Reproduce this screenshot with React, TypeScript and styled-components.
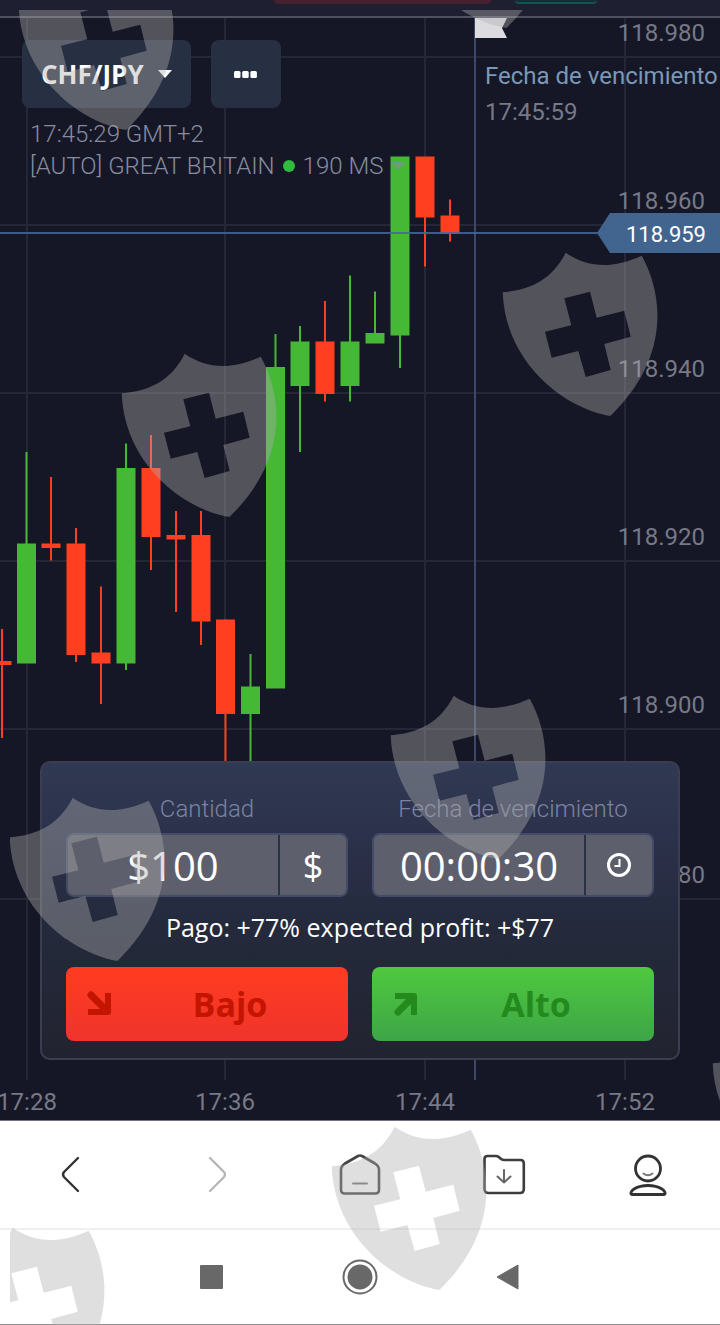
import React from "react";
import styled, { createGlobalStyle } from "styled-components";

const GlobalStyle = createGlobalStyle`
  *, *::before, *::after { box-sizing: border-box; }
  body { margin: 0; background: #fff; }
  button, input { font: inherit; color: inherit; margin: 0; padding: 0; border: 0; background: none; }
  button { cursor: pointer; }
  svg { display: block; }
`;

const Page = styled.div`
  position: relative;
  overflow: hidden;
  font-family: "Open Sans", "Noto Sans", sans-serif;
`;

const TopStrip = styled.div`
  display: flex;
  align-items: flex-start;
  gap: 24px;
  height: 18px;
  padding-left: 274px;
  background: #1e1f31;
  border-bottom: 2px solid #50515f;
`;

const StripPill = styled.div<{ $tone: "loss" | "deposit" }>`
  width: ${(p) => (p.$tone === "loss" ? 217 : 82)}px;
  height: 4px;
  border-radius: 0 0 8px 8px;
  background: ${(p) => (p.$tone === "loss" ? "#47202f" : "#152c38")};
  border-bottom: ${(p) => (p.$tone === "loss" ? "0" : "2px solid #0d5850")};
`;

const Terminal = styled.main`
  position: relative;
  background: #161726;
  border-bottom: 1px solid #77707c;
`;

const ChartSvg = styled.svg`
  width: 100%;
  height: auto;
  font-family: Roboto, sans-serif;
  font-size: 24px;
`;

const ChartHeader = styled.div`
  position: absolute;
  top: 22px;
  left: 22px;
`;

const Toolbar = styled.div`
  display: flex;
  gap: 20px;
`;

const ToolButton = styled.button`
  display: flex;
  align-items: center;
  justify-content: center;
  gap: 14px;
  height: 68px;
  min-width: 70px;
  padding: 0 19px;
  border-radius: 8px;
  background: #273042;
  color: #fff;
  font-size: 26px;
  font-weight: 700;
`;

const ServerInfo = styled.div`
  padding: 10px 0 0 8px;
  color: #868ca0;
  font-family: Roboto, sans-serif;
  font-size: 24px;
  font-weight: 300;
  line-height: 32px;
`;

const ServerRow = styled.div`
  display: flex;
  align-items: center;
  gap: 8px;
`;

const StatusDot = styled.span`
  width: 12px;
  height: 12px;
  border-radius: 50%;
  background: #2fbb3e;
`;

const TradePanel = styled.form`
  position: absolute;
  left: 40px;
  right: 40px;
  bottom: 60px;
  padding: 30px 24px 17px;
  border: 2px solid #3b3e4f;
  border-radius: 10px;
  background: linear-gradient(#303953, #2b3049 30%, #242a3c 55%, #222330);
`;

const TwoColumns = styled.div`
  display: grid;
  grid-template-columns: repeat(2, minmax(0, 1fr));
  gap: 24px;
`;

const Field = styled.div`
  display: flex;
  flex-direction: column;
  gap: 8px;
`;

const FieldLabel = styled.label`
  color: #7b83a0;
  font-family: Roboto, sans-serif;
  font-size: 24px;
  font-weight: 300;
  line-height: 32px;
  text-align: center;
`;

const FieldBox = styled.div`
  display: flex;
  height: 64px;
  border: 2px solid #434b66;
  border-radius: 8px;
  background: #5e5f6c;
  color: #fff;
`;

const FieldInput = styled.input`
  flex: 1;
  min-width: 0;
  font-size: 40px;
  text-align: center;
`;

const FieldButton = styled.button`
  display: flex;
  align-items: center;
  justify-content: center;
  width: 68px;
  border-left: 2px solid #2c3047;
  font-size: 36px;
`;

const Payout = styled.p`
  margin: 14px 0 24px;
  color: #fff;
  font-size: 25px;
  line-height: 32px;
  text-align: center;
`;

const OrderButton = styled.button<{ $side: "down" | "up" }>`
  display: flex;
  align-items: center;
  height: 74px;
  padding-left: 20px;
  border-radius: 8px;
  font-size: 34px;
  font-weight: 700;
  color: ${(p) => (p.$side === "down" ? "#c41500" : "#248a1e")};
  background: ${(p) =>
    p.$side === "down"
      ? "linear-gradient(#ff3c20, #f0342c)"
      : "linear-gradient(#4fc93e, #3da548)"};
`;

const OrderLabel = styled.span`
  flex: 1;
  text-align: center;
`;

const BrowserNav = styled.nav`
  display: grid;
  grid-template-columns: repeat(5, 1fr);
  height: 109px;
  border-bottom: 2px solid #f0f0f0;
  background: #fff;
`;

const SystemNav = styled.nav`
  display: flex;
  justify-content: center;
  height: 95px;
  border-bottom: 1px solid #8c8c8c;
  background: #fff;
`;

const NavButton = styled.button<{ $width?: number }>`
  display: flex;
  align-items: center;
  justify-content: center;
  width: ${(p) => (p.$width ? `${p.$width}px` : "auto")};
`;

const WatermarkLayer = styled.div`
  position: absolute;
  inset: 10px 0 0 10px;
  overflow: hidden;
  pointer-events: none;
`;

const Shield = styled.svg<{ $x: number; $y: number }>`
  position: absolute;
  left: ${(p) => p.$x}px;
  top: ${(p) => p.$y}px;
`;

const RED = "#ff3f20";
const GREEN = "#45b836";

type Candle = { x: number; top: number; bottom: number; high: number; low: number; up?: boolean };

const candles: Candle[] = [
  { x: 2, top: 661, bottom: 665, high: 629, low: 738 },
  { x: 26.5, top: 543.5, bottom: 663.5, high: 452, low: 663, up: true },
  { x: 51, top: 543.5, bottom: 548, high: 477, low: 560.5 },
  { x: 76, top: 543.5, bottom: 655, high: 528, low: 662 },
  { x: 101, top: 652.5, bottom: 663.5, high: 586.5, low: 704 },
  { x: 126, top: 468, bottom: 663.5, high: 443.5, low: 670, up: true },
  { x: 151, top: 468, bottom: 537, high: 435, low: 570 },
  { x: 176, top: 535, bottom: 539.5, high: 511, low: 612 },
  { x: 201, top: 535, bottom: 621.5, high: 511, low: 645 },
  { x: 225.5, top: 619.5, bottom: 714, high: 619.5, low: 780 },
  { x: 250.5, top: 686.5, bottom: 714, high: 654, low: 780, up: true },
  { x: 275.5, top: 367, bottom: 688.5, high: 334, low: 688, up: true },
  { x: 300, top: 341.5, bottom: 386, high: 326, low: 452, up: true },
  { x: 325, top: 341.5, bottom: 394, high: 301, low: 401.5 },
  { x: 350, top: 341.5, bottom: 386, high: 275.5, low: 401.5, up: true },
  { x: 375, top: 333, bottom: 343.5, high: 291.5, low: 343, up: true },
  { x: 400, top: 156.5, bottom: 335.5, high: 157, low: 368, up: true },
  { x: 425, top: 156.5, bottom: 217.5, high: 157, low: 266.5 },
  { x: 450, top: 215.5, bottom: 234, high: 199.5, low: 241.5 },
];

const prices = [
  { label: "118.980", grid: 57, text: 41 },
  { label: "118.960", grid: 225, text: 209 },
  { label: "118.940", grid: 393, text: 377 },
  { label: "118.920", grid: 561, text: 545 },
  { label: "118.900", grid: 729, text: 713 },
  { label: "118.880", grid: 899, text: 883 },
];

const times = [
  { label: "17:28", x: 27 },
  { label: "17:36", x: 225 },
  { label: "17:44", x: 425 },
  { label: "17:52", x: 625 },
];

const shields = [
  [18, -34], [398, -136], [502, 252], [121, 353], [390, 695],
  [9, 797], [712, 1023], [331, 1126], [-51, 1227],
];

function PriceChart() {
  return (
    <ChartSvg viewBox="0 18 720 1102" role="img" aria-label="CHF/JPY">
      <g stroke="#262736" strokeWidth="2">
        {times.map((t) => <line key={t.label} x1={t.x} x2={t.x} y1={18} y2={1080} />)}
        {prices.map((p) => <line key={p.label} x1={0} x2={720} y1={p.grid} y2={p.grid} />)}
      </g>
      {candles.map((c) => (
        <g key={c.x} fill={c.up ? GREEN : RED}>
          <rect x={c.x - 1} y={c.high} width={2} height={c.low - c.high} />
          <rect x={c.x - 9.5} y={c.top} width={19} height={c.bottom - c.top} />
        </g>
      ))}
      <line x1={475} x2={475} y1={18} y2={1080} stroke="#3b4a6b" strokeWidth="2" />
      <line x1={0} x2={600} y1={233} y2={233} stroke="#44679a" strokeOpacity="0.85" strokeWidth="2" />
      <path d="M475 18H507L502 28L507 38H475Z" fill="#dcdce0" />
      <g fill="#777986" textAnchor="end">
        {prices.map((p) => <text key={p.label} x={705} y={p.text}>{p.label}</text>)}
      </g>
      <path d="M597 233L610 213H720V253H610Z" fill="#42658f" />
      <text x={706} y={242} fill="#fff" fontSize={22} textAnchor="end">118.959</text>
      <text x={485} y={84} fill="#7b98b8">Fecha de vencimiento</text>
      <text x={485} y={120} fill="#777986">17:45:59</text>
      <g fill="#777986" textAnchor="middle">
        {times.map((t) => <text key={t.label} x={t.x} y={1110}>{t.label}</text>)}
      </g>
    </ChartSvg>
  );
}

function Watermarks() {
  return (
    <WatermarkLayer aria-hidden="true">
      {shields.map(([x, y]) => (
        <Shield key={`${x}:${y}`} $x={x - 10} $y={y - 10} width="157" height="165" viewBox="0 0 157 165">
          <path
            fill="#afafaf"
            fillOpacity="0.4"
            fillRule="evenodd"
            d="M.7 40.3C28 38 50 28 63.7.7C86 16 110 17 139.7 3.7C161 42 169 105 108.7 163.7Q106 164 103 163C55 152 3 106 .7 40.3ZM62.3 46.3L88 39.7L94.7 65.7L122.3 58.7L128.7 84.7L102.3 92L108.7 118L83.7 125L76.3 99L49.7 105.7L43 79.7L69.3 73.3Z"
          />
        </Shield>
      ))}
    </WatermarkLayer>
  );
}

export default function App() {
  return (
    <Page>
      <GlobalStyle />
      <TopStrip>
        <StripPill $tone="loss" />
        <StripPill $tone="deposit" />
      </TopStrip>
      <Terminal>
        <PriceChart />
        <ChartHeader>
          <Toolbar>
            <ToolButton type="button">
              CHF/JPY
              <svg width="14" height="8" viewBox="0 0 14 8"><path d="M0 0H14L7 8Z" fill="#fff" /></svg>
            </ToolButton>
            <ToolButton type="button" aria-label="Más">
              <svg width="23" height="7" viewBox="0 0 23 7" fill="#fff">
                <rect width="6.5" height="7" rx="1.5" />
                <rect x="8.2" width="6.5" height="7" rx="1.5" />
                <rect x="16.4" width="6.5" height="7" rx="1.5" />
              </svg>
            </ToolButton>
          </Toolbar>
          <ServerInfo>
            <div>17:45:29 GMT+2</div>
            <ServerRow>
              <span>[AUTO] GREAT BRITAIN</span>
              <StatusDot />
              <span>190 MS</span>
              <svg width="14" height="8" viewBox="0 0 14 8"><path d="M0 0H14L7 8Z" fill="#6f9a80" /></svg>
            </ServerRow>
          </ServerInfo>
        </ChartHeader>
        <TradePanel onSubmit={(e) => e.preventDefault()}>
          <TwoColumns>
            <Field>
              <FieldLabel htmlFor="amount">Cantidad</FieldLabel>
              <FieldBox>
                <FieldInput id="amount" defaultValue="$100" />
                <FieldButton type="button">$</FieldButton>
              </FieldBox>
            </Field>
            <Field>
              <FieldLabel htmlFor="expiry">Fecha de vencimiento</FieldLabel>
              <FieldBox>
                <FieldInput id="expiry" defaultValue="00:00:30" />
                <FieldButton type="button" aria-label="Reloj">
                  <svg width="26" height="26" viewBox="0 0 26 26" fill="none" stroke="#fff">
                    <circle cx="13" cy="13" r="10.5" strokeWidth="3" />
                    <path d="M13.5 7V14H8.5" strokeWidth="2" />
                  </svg>
                </FieldButton>
              </FieldBox>
            </Field>
          </TwoColumns>
          <Payout>Pago: +77% expected profit: +$77</Payout>
          <TwoColumns>
            <OrderButton type="submit" $side="down">
              <svg width="26" height="26" viewBox="0 0 26 26" fill="none" stroke="currentColor" strokeWidth="6" strokeLinejoin="round">
                <path d="M5 4L19 18" strokeWidth="7" strokeLinecap="round" />
                <path d="M22 2V21H2" />
              </svg>
              <OrderLabel>Bajo</OrderLabel>
            </OrderButton>
            <OrderButton type="submit" $side="up">
              <svg width="26" height="26" viewBox="0 0 26 26" fill="none" stroke="currentColor" strokeWidth="6" strokeLinejoin="round">
                <path d="M6 21L19 8" strokeWidth="7" strokeLinecap="round" />
                <path d="M3 5H22V24" />
              </svg>
              <OrderLabel>Alto</OrderLabel>
            </OrderButton>
          </TwoColumns>
        </TradePanel>
      </Terminal>
      <BrowserNav>
        <NavButton type="button" aria-label="Atrás">
          <svg width="44" height="44" viewBox="0 0 44 44" fill="none" stroke="#333" strokeWidth="2.4" strokeLinecap="round">
            <path d="M28 5L14 19Q12 21.5 14 24L28 38" />
          </svg>
        </NavButton>
        <NavButton type="button" aria-label="Adelante">
          <svg width="44" height="44" viewBox="0 0 44 44" fill="none" stroke="#b4b4b4" strokeWidth="2.2" strokeLinecap="round">
            <path d="M16 5L30 19Q32 21.5 30 24L16 38" />
          </svg>
        </NavButton>
        <NavButton type="button" aria-label="Inicio">
          <svg width="44" height="44" viewBox="0 0 44 44" fill="none" stroke="#444" strokeWidth="2.6" strokeLinecap="round" strokeLinejoin="round">
            <path d="M20 3Q22 2 24 3L37 10.500Q41 13 41 17V37Q41 40.500 37 40.500H7Q3 40.500 3 37V17Q3 13 7 10.500Z" />
            <path d="M15 30.500H29" stroke="#777" strokeWidth="2" />
          </svg>
        </NavButton>
        <NavButton type="button" aria-label="Descargas">
          <svg width="44" height="44" viewBox="0 0 44 44" fill="none" stroke="#3d3d3d" strokeWidth="2.6" strokeLinecap="round" strokeLinejoin="round">
            <path d="M2.500 6Q2.500 3 5.500 3H14Q16 3 18 5L19 6Q20.500 7 22.500 7H38.500Q41.800 7 41.800 10.500V36Q41.800 40 38 40H6.500Q2.500 40 2.500 36Z" />
            <path d="M22 17V29.500M15.500 23.500L22 29.500L28.500 23.500" stroke="#666" strokeWidth="2" />
          </svg>
        </NavButton>
        <NavButton type="button" aria-label="Perfil">
          <svg width="44" height="44" viewBox="0 0 44 44" fill="none" stroke="#333" strokeWidth="2.8" strokeLinecap="round" strokeLinejoin="round">
            <circle cx="22" cy="15.500" r="12.500" />
            <path d="M17.500 20.500Q22 24 26.500 20.500" stroke="#777" strokeWidth="2" />
            <path d="M6.500 41.500C3.500 41.500 5 38 8 36Q14 32.500 22 32.500T36 36C39 38 40.500 41.500 37.500 41.500Z" />
          </svg>
        </NavButton>
      </BrowserNav>
      <SystemNav>
        <NavButton type="button" $width={148} aria-label="Recientes">
          <svg width="24" height="24" viewBox="0 0 24 24"><rect width="23" height="24" rx="1" fill="#686868" /></svg>
        </NavButton>
        <NavButton type="button" $width={148} aria-label="Pantalla de inicio">
          <svg width="36" height="36" viewBox="0 0 36 36">
            <circle cx="18" cy="18" r="16.500" fill="none" stroke="#686868" strokeWidth="2" />
            <circle cx="18" cy="18" r="12.500" fill="#686868" />
          </svg>
        </NavButton>
        <NavButton type="button" $width={148} aria-label="Volver">
          <svg width="24" height="26" viewBox="0 0 24 26"><path d="M1 13L22 1V25Z" fill="#686868" stroke="#686868" strokeLinejoin="round" /></svg>
        </NavButton>
      </SystemNav>
      <Watermarks />
    </Page>
  );
}
